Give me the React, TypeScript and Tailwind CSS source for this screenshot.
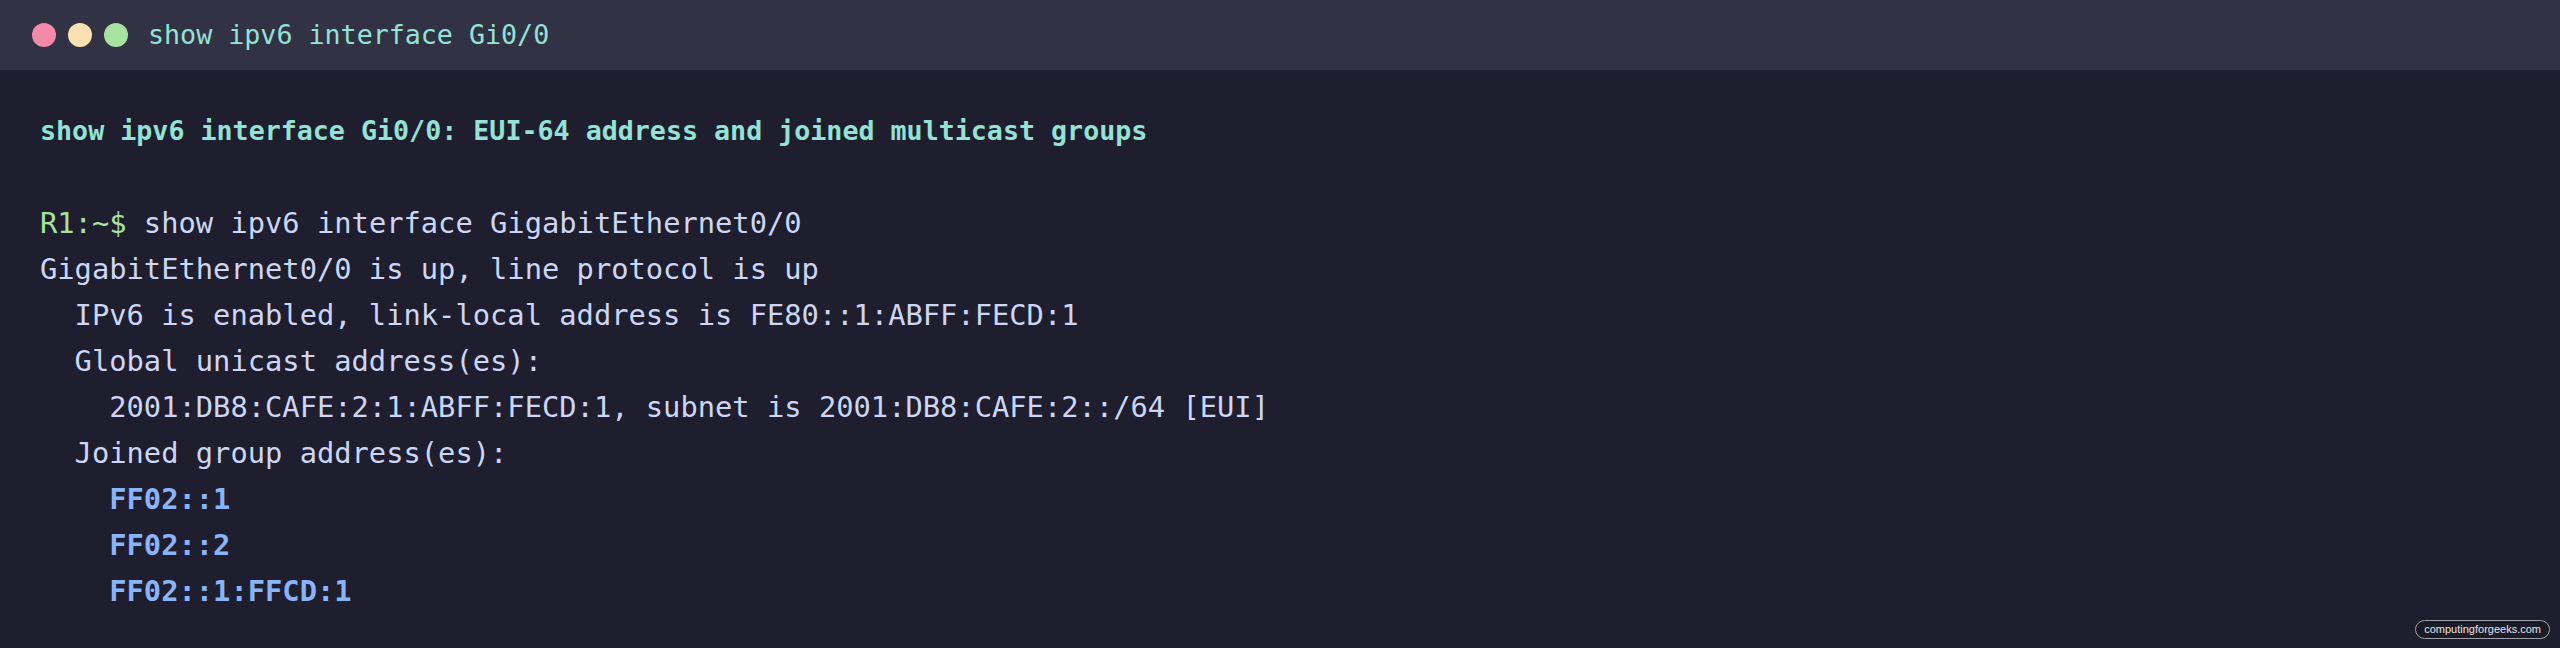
import React from 'react';

const mono = "font-['DejaVu_Sans_Mono','Liberation_Mono',monospace]";

const lines: { text: string; kind?: 'prompt' | 'group' }[] = [
  { text: 'show ipv6 interface GigabitEthernet0/0', kind: 'prompt' },
  { text: 'GigabitEthernet0/0 is up, line protocol is up' },
  { text: '  IPv6 is enabled, link-local address is FE80::1:ABFF:FECD:1' },
  { text: '  Global unicast address(es):' },
  { text: '    2001:DB8:CAFE:2:1:ABFF:FECD:1, subnet is 2001:DB8:CAFE:2::/64 [EUI]' },
  { text: '  Joined group address(es):' },
  { text: '    FF02::1', kind: 'group' },
  { text: '    FF02::2', kind: 'group' },
  { text: '    FF02::1:FFCD:1', kind: 'group' },
];

const App = () => {
  return (
    <div className={`relative w-full h-[648px] bg-[#1e1e2e] flex flex-col ${mono}`}>
      {/* title bar */}
      <div className="h-[70px] shrink-0 bg-[#313244] flex items-center pl-8">
        <div className="flex gap-3">
          <span className="w-6 h-6 rounded-full bg-[#f38ba8]" />
          <span className="w-6 h-6 rounded-full bg-[#f9e2af]" />
          <span className="w-6 h-6 rounded-full bg-[#a6e3a1]" />
        </div>
        <span className="ml-5 text-[26.67px] text-[#94e2d5] whitespace-pre">show ipv6 interface Gi0/0</span>
      </div>

      {/* terminal body */}
      <div className="pt-[38px] pl-10 text-[28.75px] leading-[46px] text-[#cdd6f4]">
        <div className="font-bold text-[26.67px] text-[#94e2d5] whitespace-pre">
          show ipv6 interface Gi0/0: EUI-64 address and joined multicast groups
        </div>
        <div className="h-[46px]" />
        {lines.map((l, i) => (
          <div key={i} className="whitespace-pre">
            {l.kind === 'prompt' && <span className="text-[#a6e3a1]">R1:~$ </span>}
            {l.kind === 'group' ? (
              <span className="font-bold text-[#89b4fa]">{l.text}</span>
            ) : (
              l.text
            )}
          </div>
        ))}
      </div>

      <div className="absolute right-[10px] bottom-[9px] h-[19px] px-2 flex items-center rounded-full border border-[#a0a0a8] bg-[#1b1b28] text-[11px] text-[#e4e4ea] font-['Liberation_Sans',Arial,sans-serif]">
        computingforgeeks.com
      </div>
    </div>
  );
};

export default App;
